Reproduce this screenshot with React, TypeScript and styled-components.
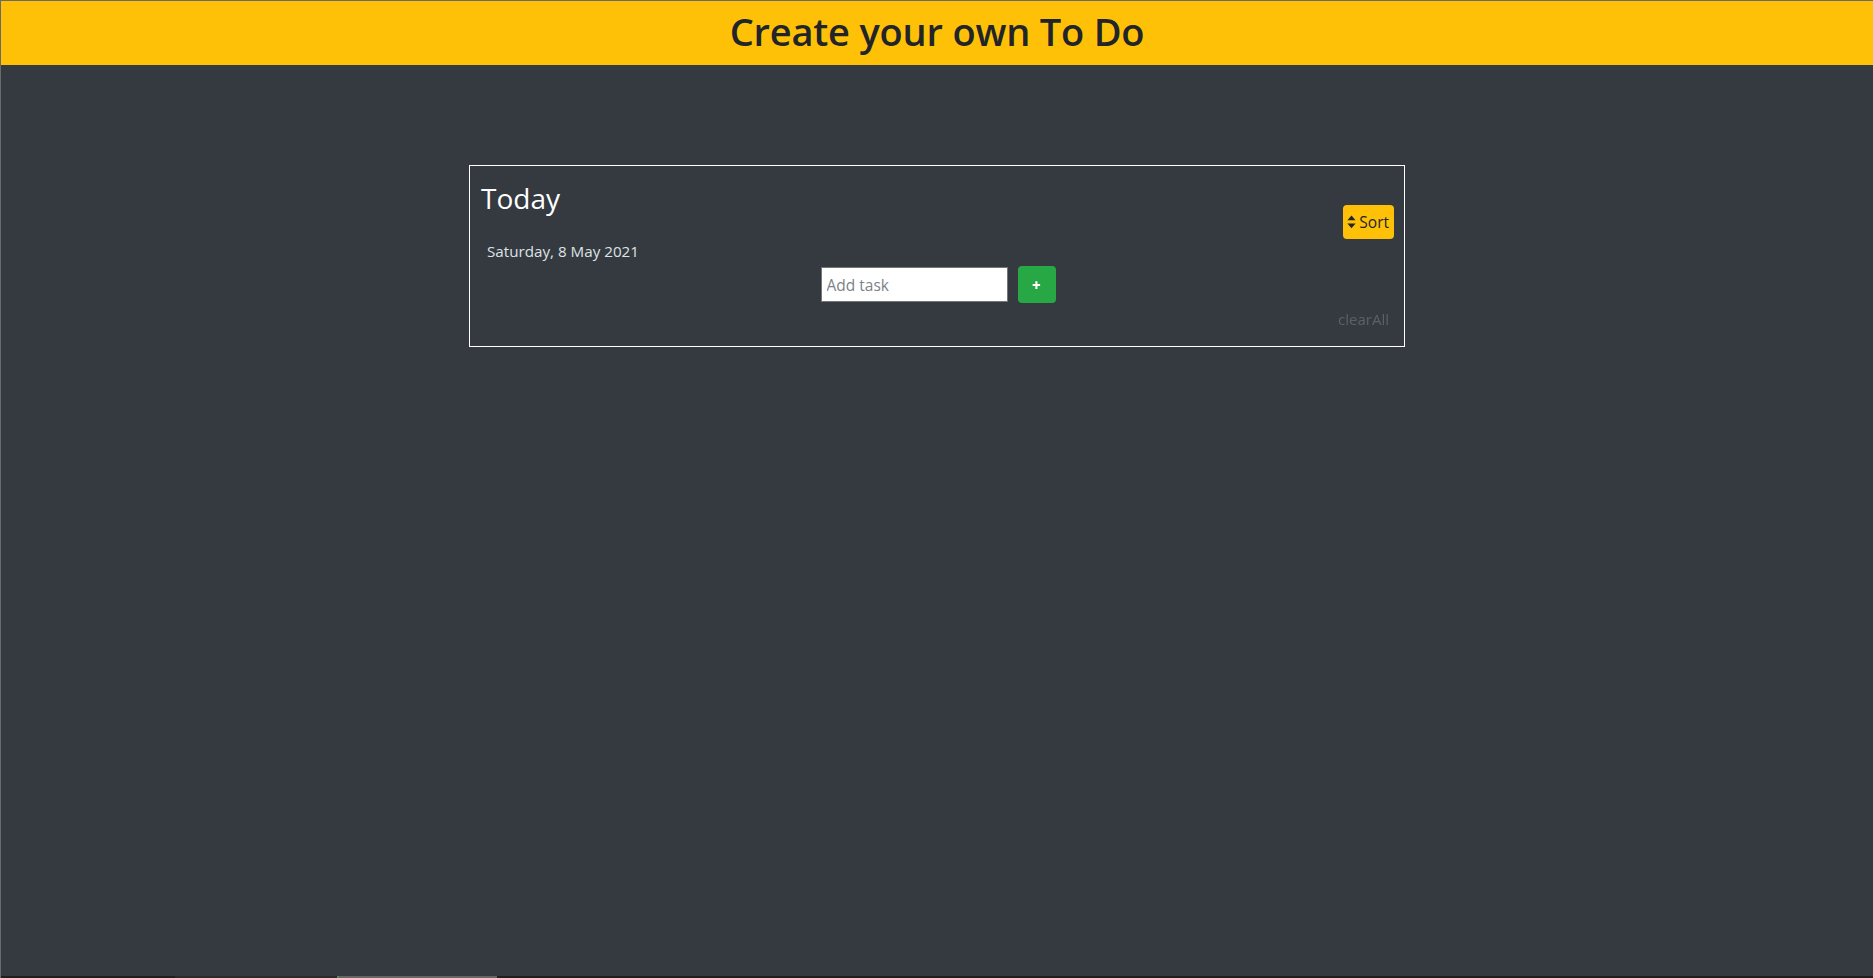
import React from "react";
import styled, { createGlobalStyle } from "styled-components";

const GlobalStyle = createGlobalStyle`
  html, body {
    margin: 0;
    padding: 0;
    background: #343a40;
  }
  body {
    font-family: "Open Sans", "Noto Sans", "Liberation Sans", sans-serif;
    color: #212529;
  }
  * { box-sizing: border-box; }
`;

const Page = styled.div`
  min-height: 100vh;
  display: flex;
  flex-direction: column;
  border-top: 1px solid #6a6a6a;
  border-left: 1px solid #6a6a6a;
  background: #343a40;
`;

const Header = styled.header`
  height: 64px;
  background: #ffc107;
  display: flex;
  align-items: center;
  justify-content: center;
  padding-bottom: 4px;
`;

const HeaderTitle = styled.h1`
  margin: 0;
  font-size: 38px;
  font-weight: 600;
  color: #212529;
  letter-spacing: -0.2px;
`;

const Main = styled.main`
  flex: 1;
  padding-top: 100px;
`;

const Card = styled.section`
  width: 936px;
  margin: 0 auto;
  border: 1px solid #ffffff;
  padding: 14px 15px 14px 11px;
  display: flex;
  flex-direction: column;
`;

const TopRow = styled.div`
  display: flex;
  justify-content: space-between;
  align-items: flex-start;
  margin-right: -5px;
`;

const Title = styled.h2`
  margin: 0;
  font-size: 28px;
  font-weight: 400;
  line-height: 36px;
  color: #ffffff;
`;

const SortButton = styled.button`
  margin-top: 25px;
  height: 34px;
  padding: 0 5px 0 4px;
  display: flex;
  align-items: center;
  gap: 3px;
  background: #ffc107;
  border: none;
  border-radius: 4px;
  font-family: inherit;
  font-size: 15.5px;
  color: #212529;
  cursor: pointer;
`;

const DateText = styled.div`
  margin-left: 6px;
  font-size: 15.2px;
  line-height: 24px;
  color: #dee2e6;
`;

const AddRow = styled.div`
  margin-top: 3px;
  display: flex;
  justify-content: center;
  align-items: center;
  gap: 10px;
  padding-left: 6px;
`;

const TaskInput = styled.input`
  width: 187px;
  height: 35px;
  border: 1px solid #767676;
  padding: 0 5px;
  font-family: inherit;
  font-size: 15.5px;
  color: #212529;
  background: #fff;
  outline: none;
  caret-color: #000;
  &::placeholder {
    color: #7d8288;
  }
`;

const AddButton = styled.button`
  width: 38px;
  height: 37px;
  border: none;
  border-radius: 4px;
  background: #28a745;
  color: #fff;
  font-family: inherit;
  font-weight: 800;
  font-size: 15px;
  display: flex;
  align-items: center;
  justify-content: center;
  padding: 0;
  cursor: pointer;
`;

const FooterRow = styled.div`
  display: flex;
  justify-content: flex-end;
  margin-top: 4px;
`;

const ClearLink = styled.span`
  font-size: 15px;
  line-height: 25px;
  color: #5c6168;
  cursor: pointer;
`;

const BottomStrip = styled.div`
  height: 2px;
  display: flex;
  background: #1f1f1f;
`;

const StripSegment = styled.div<{ $w: number; $c: string }>`
  width: ${(p) => p.$w}px;
  background: ${(p) => p.$c};
`;

const SortIcon = () => (
  <svg width="9" height="14" viewBox="0 0 9 14" aria-hidden="true">
    <path d="M4.5 0.5 L8.6 5.3 L0.4 5.3 Z" fill="#212529" />
    <path d="M0.4 8.5 L8.6 8.5 L4.5 13.3 Z" fill="#212529" />
  </svg>
);

export default function App() {
  return (
    <>
      <GlobalStyle />
      <Page>
        <Header>
          <HeaderTitle>Create your own To Do</HeaderTitle>
        </Header>
        <Main>
          <Card>
            <TopRow>
              <Title>Today</Title>
              <SortButton>
                <SortIcon />
                Sort
              </SortButton>
            </TopRow>
            <DateText>Saturday, 8 May 2021</DateText>
            <AddRow>
              <TaskInput placeholder="Add task" autoFocus />
              <AddButton>+</AddButton>
            </AddRow>
            <FooterRow>
              <ClearLink>clearAll</ClearLink>
            </FooterRow>
          </Card>
        </Main>
        <BottomStrip>
          <StripSegment $w={174} $c="#1f1f1f" />
          <StripSegment $w={162} $c="#2c2c2c" />
          <StripSegment $w={2} $c="#5a8a5a" />
          <StripSegment $w={158} $c="#666666" />
        </BottomStrip>
      </Page>
    </>
  );
}
